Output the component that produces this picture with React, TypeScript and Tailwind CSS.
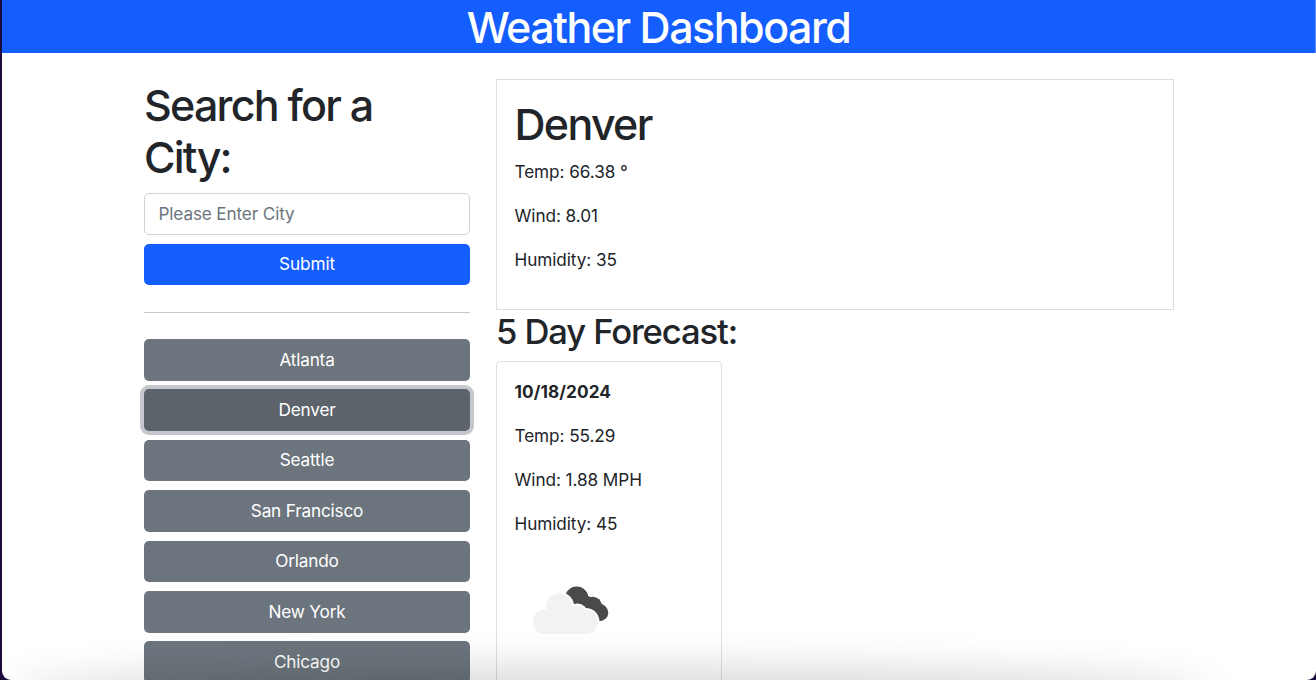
const cities = ["Atlanta", "Denver", "Seattle", "San Francisco", "Orlando", "New York", "Chicago"];

function CloudIcon() {
  return (
    <svg width="108" height="108" viewBox="0 0 108 108" className="block">
      <g fill="#4a4a4c">
        <circle cx="61.7" cy="42.3" r="11.7" />
        <circle cx="77.7" cy="49.7" r="9" />
        <circle cx="85" cy="56.7" r="8.3" />
        <path d="M58 34 L78 42 L90 50 L88 64 L70 70 L52 52 Z" />
      </g>
      <g fill="#ffffff">
        <circle cx="44.3" cy="50.7" r="14.8" />
        <circle cx="62.3" cy="58" r="10.5" />
        <circle cx="70.7" cy="65.7" r="13.8" />
      </g>
      <g fill="#f2f2f0">
        <circle cx="44.3" cy="50.7" r="13.3" />
        <circle cx="62.3" cy="58" r="9" />
        <circle cx="30" cy="65.7" r="12.3" />
        <circle cx="70.7" cy="65.7" r="12.3" />
        <rect x="30" y="58" width="41" height="20" />
      </g>
    </svg>
  );
}

export default function App() {
  return (
    <div className="relative h-[680px] w-[1316px] overflow-hidden bg-[#1a0b3c] font-['Inter',sans-serif] text-[17.2px] leading-[26px] tracking-[-0.08px] text-[#212529]">
      <div className="ml-[2px] h-[680px] overflow-hidden rounded-b-[9px] bg-white">
        <div className="flex h-[53px] items-center justify-center border-r border-[#5d8cff] bg-[#145dff] text-[43px] font-medium leading-[52px] tracking-[-1.5px] text-white">
          Weather Dashboard
        </div>
        <div className="flex gap-[26px] pl-[142px] pt-[26px]">
          <div className="w-[326px]">
            <h2 className="text-[43px] font-medium leading-[52px] tracking-[-1.75px]">
              Search for a
              <br />
              City:
            </h2>
            <div className="mt-[10px] flex h-[42px] items-center rounded-[5px] border border-[#ced4da] bg-white px-[13.5px] tracking-[-0.15px] text-[#6c757d]">
              Please Enter City
            </div>
            <button className="mt-[9px] h-[41px] w-full rounded-[5px] bg-[#145dff] pb-[2px] text-white">Submit</button>
            <hr className="mt-[27px] border-t border-[#c9c9c9]" />
            <div className="mt-[26px] flex flex-col gap-[8.8px]">
              {cities.map((c) => (
                <button
                  key={c}
                  className={
                    c === "Denver"
                      ? "h-[41.6px] w-full shrink-0 rounded-[5px] bg-[#5c636a] pb-[0.4px] tracking-[-0.18px] text-white ring-[4px] ring-[#c4c8cc]"
                      : "h-[41.6px] w-full shrink-0 rounded-[5px] bg-[#6c757d] pb-[0.4px] tracking-[-0.18px] text-white"
                  }
                >
                  {c}
                </button>
              ))}
            </div>
          </div>
          <div className="w-[678px]">
            <div className="h-[231px] border border-[#dfdfdf] px-[17.5px] py-[18px]">
              <h2 className="mb-[9px] text-[43px] font-medium leading-[52px] tracking-[-1.7px]">Denver</h2>
              <p className="mb-[18px]">Temp: 66.38 °</p>
              <p className="mb-[18px]">Wind: 8.01</p>
              <p className="mb-[18px]">Humidity: 35</p>
            </div>
            <h3 className="mt-px text-[34.6px] font-medium leading-[41.5px] tracking-[-1.1px]">5 Day Forecast:</h3>
            <div className="mt-[8px] w-[226px] rounded-[4px] border border-[#dfdfdf] px-[17.5px] pb-[60px] pt-[17px]">
              <p className="mb-[18px] font-bold tracking-[0.1px]">10/18/2024</p>
              <p className="mb-[18px]">Temp: 55.29</p>
              <p className="mb-[18px]">Wind: 1.88 MPH</p>
              <p className="mb-[19px]">Humidity: 45</p>
              <CloudIcon />
            </div>
          </div>
        </div>
      </div>
      <div className="pointer-events-none absolute bottom-[-30px] left-[20px] h-[30px] w-[1180px] rounded-[50%] shadow-[0_0_40px_12px_rgba(0,0,0,0.16)]" />
    </div>
  );
}
